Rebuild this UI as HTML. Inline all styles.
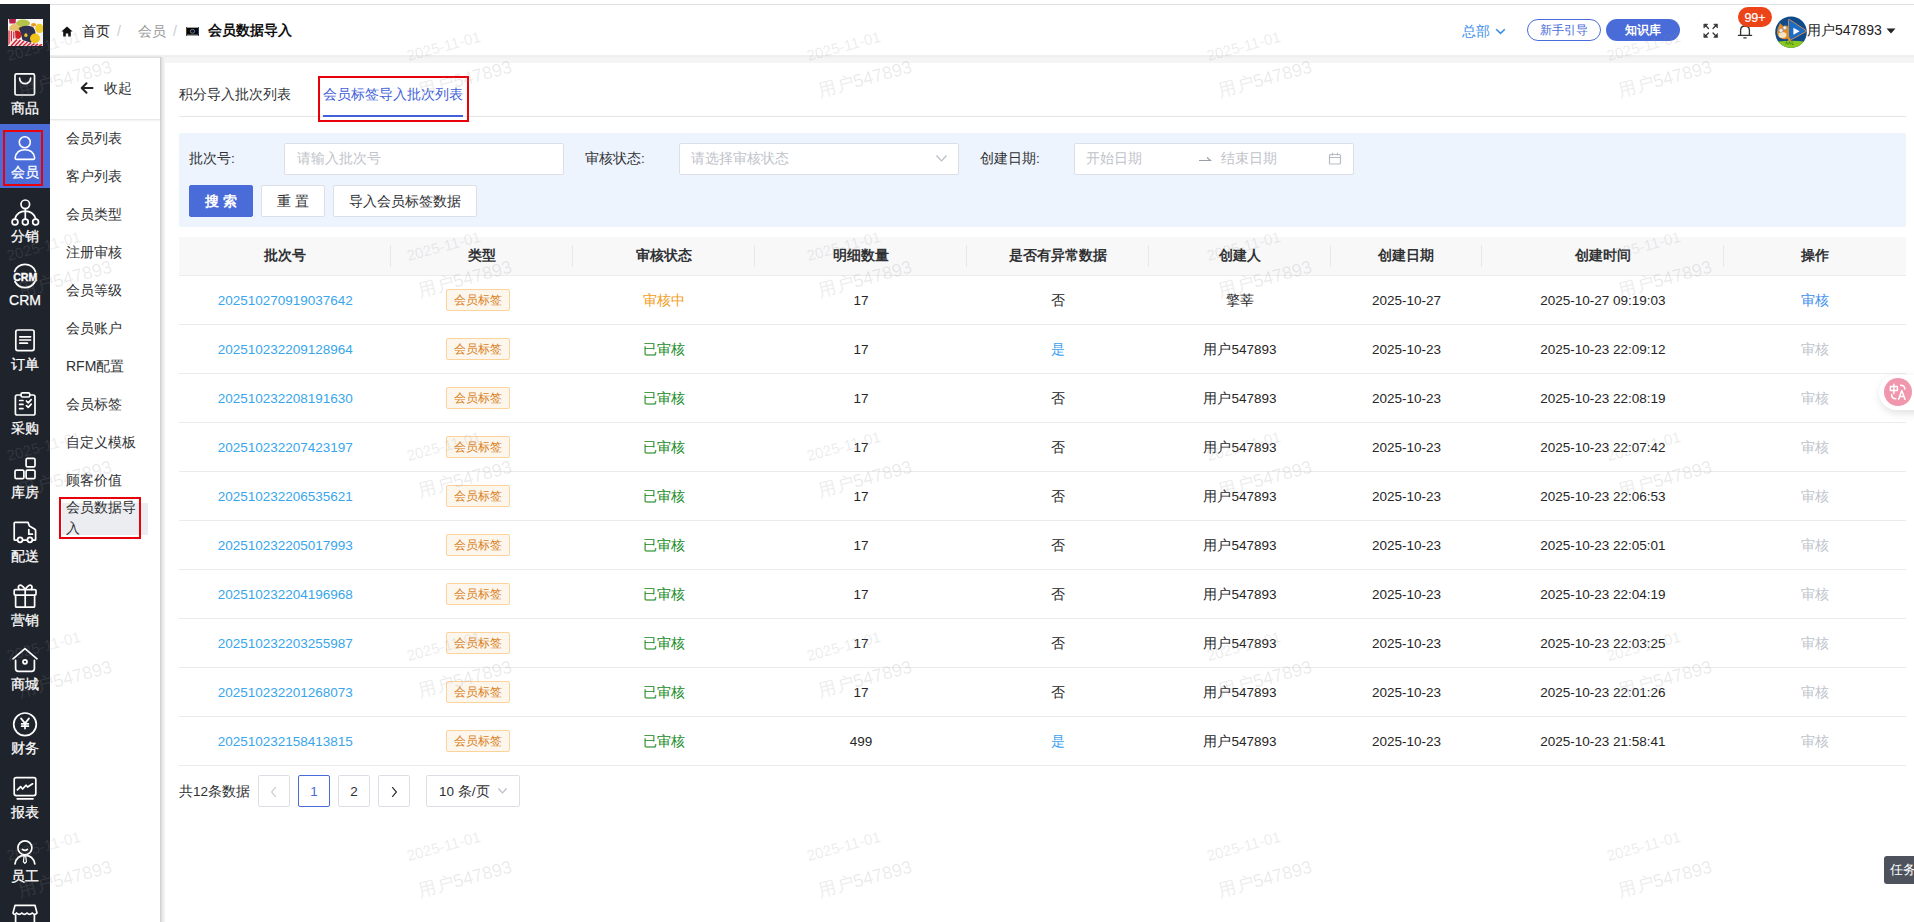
<!DOCTYPE html>
<html><head><meta charset="utf-8"><title>会员数据导入</title>
<style>
*{box-sizing:border-box;margin:0;padding:0}
html,body{width:1914px;height:922px;overflow:hidden;background:#fff;font-family:"Liberation Sans",sans-serif;color:#333}
.abs{position:absolute}
#topline{position:absolute;left:50px;top:4px;width:1864px;height:1px;background:#dfe1e2}
#side{position:absolute;left:0;top:4px;width:50px;height:918px;background:#1f232b}
#logo{position:absolute;left:8px;top:15px;width:35px;height:27px;overflow:hidden;background:#fff}
.mi{position:absolute;left:0;width:50px;height:64px;color:#fff}
.mi svg{position:absolute;left:0;top:0;width:50px;height:64px}
.mi .lb{position:absolute;left:0;width:50px;top:38px;height:20px;line-height:20px;text-align:center;font-size:14px;color:#fff;-webkit-text-stroke:0.25px #fff}
.mi.act{background:#4a6cd8}
.redbox{position:absolute;border:2px solid #e8000b}
#header{position:absolute;left:50px;top:5px;width:1864px;height:50px;background:#fff}
#gray{position:absolute;left:50px;top:55px;width:1864px;height:867px;background:#f5f5f5}
#hshadow{position:absolute;left:50px;top:55px;width:1864px;height:3px;background:linear-gradient(#f0f0f0,#eeeeee 60%,#f5f5f5)}
#sub{position:absolute;left:50px;top:58px;width:110px;height:864px;background:#fff}
#subsh{position:absolute;left:160px;top:57px;width:5px;height:865px;background:linear-gradient(to right,#cbcbcb,#e6e6e6 40%,#f5f5f5)}
#subtop{position:absolute;left:50px;top:55px;width:110px;height:4px;background:linear-gradient(#f2f2f2,#dedede 70%,#e9e9e9)}
#collapse{position:absolute;left:0;top:0;width:110px;height:62px;border-bottom:1px solid #e8e8e8;box-shadow:0 1px 2px rgba(0,0,0,.06)}
.si{position:absolute;left:16px;font-size:14px;line-height:20px;color:#303133;white-space:nowrap}
#main{position:absolute;left:165px;top:63px;width:1749px;height:859px;background:#fff}
.bc{position:absolute;top:22px;font-size:14px;line-height:18px;white-space:nowrap}
.tab{position:absolute;top:84px;font-size:14px;line-height:20px;color:#303133;white-space:nowrap}
#tabline{position:absolute;left:179px;top:116px;width:1727px;height:1px;background:#e6e6e8}
#tabbar{position:absolute;left:323px;top:115px;width:140px;height:2px;background:#4361d8}
#filter{position:absolute;left:179px;top:133px;width:1727px;height:94px;background:#edf4fe;border-radius:2px}
.flb{position:absolute;top:150px;font-size:13.5px;line-height:18px;color:#303133;white-space:nowrap}
.inp{position:absolute;top:143px;width:280px;height:32px;background:#fff;border:1px solid #dcdfe6;border-radius:2px}
.ph{position:absolute;top:150px;font-size:13.7px;line-height:18px;color:#bfc3ca;white-space:nowrap}
.btn{position:absolute;top:185px;height:32px;border:1px solid #dcdfe6;background:#fff;border-radius:2px;font-size:14px;line-height:30px;text-align:center;color:#303133;white-space:nowrap}
.btn.pri{background:#4a6cd8;border-color:#4a6cd8;color:#fff}
#table{position:absolute;left:179px;top:237px;width:1727px;height:529px}
#thead{position:absolute;left:0;top:0;width:1727px;height:39px;background:#f8f8f9;border-bottom:1px solid #ebebeb}
.th{position:absolute;top:0;height:38px;padding-left:1px;line-height:37px;text-align:center;font-size:13.5px;font-weight:bold;color:#303133;white-space:nowrap}
.thsep{position:absolute;top:8px;width:1px;height:22px;background:#e6e8eb}
.tr{position:absolute;left:0;width:1727px;height:49px;border-bottom:1px solid #ebebeb}
.td{position:absolute;top:1px;height:48px;padding-left:1px;line-height:48px;text-align:center;font-size:13.5px;color:#262626;white-space:nowrap}
.link{color:#38a6ec}
.tag{display:inline-block;vertical-align:middle;height:22px;line-height:20px;padding:0 7px;font-size:12px;color:#d97f1c;background:#fdf6ec;border:1px solid #fbd39b;border-radius:2px;margin-top:-3px;position:relative;left:-4px}
.warn{color:#f39b16}
.ok{color:#148a24}
.yes{color:#3aa0f0}
.op{color:#3e8ef0}
.opd{color:#c0c4cc}
.pg{position:absolute;top:775px;width:32px;height:32px;border:1px solid #dcdfe6;border-radius:2px;background:#fff;text-align:center;line-height:31px;font-size:13.5px;color:#303133}
.wm1,.wm2{position:absolute;white-space:nowrap;transform-origin:0 100%;transform:rotate(-15deg);color:rgba(145,148,152,.19);pointer-events:none}
.wm1{font-size:15px;line-height:15px;margin-top:-13px;margin-left:1px}
.wm2{font-size:18px;line-height:18px;margin-top:-16px;margin-left:1px}
#wm{position:absolute;left:0;top:0;width:1914px;height:922px;overflow:hidden;pointer-events:none}

</style></head><body>
<div id="topline"></div>
<div id="gray"></div>
<div id="hshadow"></div>
<div id="header"></div>
<div id="main"></div>

<!-- LEFT SIDEBAR -->
<div id="side">
  <div id="logo">
    <svg width="35" height="27" viewBox="0 0 35 27">
      <defs><filter id="lb" x="-5%" y="-5%" width="110%" height="110%"><feGaussianBlur stdDeviation="0.45"/></filter></defs>
      <rect width="35" height="27" fill="#f4f2f0"/>
      <g filter="url(#lb)">
      <rect x="0" y="0" width="35" height="6" fill="#faf8f8"/>
      <path d="M1 0 H8 L7.5 4.6 H1.5Z" fill="#b8204a"/>
      <ellipse cx="15" cy="4.2" rx="7" ry="3.6" fill="#b4c44a"/>
      <ellipse cx="25.6" cy="5.8" rx="2.6" ry="1.8" fill="#ec9a20"/>
      <ellipse cx="6.3" cy="9.5" rx="5" ry="4.4" fill="#e6c070"/>
      <ellipse cx="31.5" cy="9.4" rx="4.2" ry="4.6" fill="#f0cc2a"/>
      <ellipse cx="12.5" cy="9.5" rx="2.5" ry="2.2" fill="#d8b020"/>
      <path d="M11 9 Q17 5 25 8 Q28.5 12 27 18 Q25 25 19 24.5 Q14 23 13.5 17Z" fill="#2e3050"/>
      <ellipse cx="8.6" cy="16" rx="4.9" ry="4.3" fill="#cc2028"/>
      <ellipse cx="17.9" cy="16.2" rx="1.6" ry="1.9" fill="#e8c820"/>
      <ellipse cx="27" cy="19.4" rx="5" ry="4.8" fill="#f0c414"/>
      <path d="M0 11 L7 12 L7.5 20 L0 27Z" fill="#f6f0f0"/>
      <path d="M1 11.5 V26 M3.4 12 V25 M5.8 12.5 V23" stroke="#d8283a" stroke-width="1.3"/>
      <path d="M0 27 L6 19 Q15 20.5 22 23.5 L35 25 V27Z" fill="#f4eaea"/>
      <path d="M3 27 L9 20.5 M7 27 L12.5 21 M11 27 L16 22 M15 27 L19.5 23 M19 27 L23 24 M23 27 L26.5 24.6 M27 27 L30 25 M31 27 L34 25.4" stroke="#d42234" stroke-width="1.5"/>
      </g>
    </svg>
  </div>
</div>

<div class="mi" style="top:60px">
  <svg width="50" height="64" viewBox="0 0 50 64" fill="none" stroke="#fff" stroke-width="1.7" stroke-linecap="round" stroke-linejoin="round">
    <rect x="15" y="13.8" width="19.5" height="21.2" rx="1.6"/>
    <path d="M19.6 18.2 A5.5 5.5 0 0 0 30.6 18.2"/>
  </svg>
  <div class="lb">商品</div>
</div>
<div class="mi act" style="top:124px">
  <svg width="50" height="64" viewBox="0 0 50 64" fill="none" stroke="#fff" stroke-width="1.6" stroke-linecap="round" stroke-linejoin="round">
    <circle cx="24.8" cy="18.3" r="5.5"/>
    <path d="M16.8 35.4 L33 35.4 Q34.8 35.4 34.6 33.6 Q33.2 25.8 24.9 25.8 Q16.6 25.8 15.2 33.6 Q15 35.4 16.8 35.4Z"/>
  </svg>
  <div class="lb">会员</div>
</div>
<div class="mi" style="top:188px">
  <svg width="50" height="64" viewBox="0 0 50 64" fill="none" stroke="#fff" stroke-width="1.7" stroke-linecap="round" stroke-linejoin="round">
    <circle cx="25.3" cy="16.3" r="4.3"/>
    <path d="M25.3 20.6 V30.6 M15 30.6 Q17.5 23.2 25.3 23.2 Q33.1 23.2 35.6 30.6"/>
    <circle cx="15" cy="34" r="2.9"/>
    <circle cx="25.3" cy="34" r="2.9"/>
    <circle cx="35.6" cy="34" r="2.9"/>
  </svg>
  <div class="lb">分销</div>
</div>
<div class="mi" style="top:252px">
  <svg width="50" height="64" viewBox="0 0 50 64" fill="none" stroke="#fff" stroke-width="1.7" stroke-linecap="round">
    <path d="M14.6 19.5 A11.2 11.2 0 0 1 35.4 19.5"/>
    <path d="M15 29.5 A11.2 11.2 0 0 0 35 29.5"/>
    <text x="25.2" y="28.9" fill="#fff" stroke="#fff" stroke-width="0.35" font-family="Liberation Sans" font-weight="bold" font-size="10.6" text-anchor="middle">CRM</text>
  </svg>
  <div class="lb" style="font-size:14px">CRM</div>
</div>
<div class="mi" style="top:316px">
  <svg width="50" height="64" viewBox="0 0 50 64" fill="none" stroke="#fff" stroke-width="1.7" stroke-linecap="round" stroke-linejoin="round">
    <rect x="15.8" y="14" width="18.3" height="20.6" rx="2"/>
    <path d="M19.8 20.8 H30.6 M19.8 24 H30.6 M19.8 27.2 H27.4"/>
  </svg>
  <div class="lb">订单</div>
</div>
<div class="mi" style="top:380px">
  <svg width="50" height="64" viewBox="0 0 50 64" fill="none" stroke="#fff" stroke-width="1.7" stroke-linecap="round" stroke-linejoin="round">
    <path d="M20.6 15 H17.2 Q15.4 15 15.4 16.8 V33.2 Q15.4 35 17.2 35 H33.2 Q35 35 35 33.2 V16.8 Q35 15 33.2 15 H29.8"/>
    <rect x="21" y="12.8" width="8.8" height="4.2" rx="1.6"/>
    <path d="M19.6 20.5 H23 M19.6 24.4 H23 M19.6 28.6 H23 M26.4 21 L28.2 22.8 L31.2 19.6 M26.4 25.6 L28.2 27.4 L31.2 24.2"/>
  </svg>
  <div class="lb">采购</div>
</div>
<div class="mi" style="top:444px">
  <svg width="50" height="64" viewBox="0 0 50 64" fill="none" stroke="#fff" stroke-width="1.7" stroke-linejoin="round">
    <rect x="26.1" y="14.3" width="8.9" height="8.6" rx="1.4"/>
    <rect x="15" y="26.1" width="8.9" height="8.6" rx="1.4"/>
    <rect x="26.1" y="26.1" width="8.9" height="8.6" rx="1.4"/>
  </svg>
  <div class="lb">库房</div>
</div>
<div class="mi" style="top:508px">
  <svg width="50" height="64" viewBox="0 0 50 64" fill="none" stroke="#fff" stroke-width="1.7" stroke-linecap="round" stroke-linejoin="round">
    <path d="M17.6 32.2 H15 Q14.2 32.2 14.2 31.4 V15.2 Q14.2 14.4 15 14.4 H28 L29.4 18 L34.6 21 Q35.6 21.6 35.6 22.8 V31.4 Q35.6 32.2 34.8 32.2 H32.4 M22.6 32.2 H27.4"/>
    <path d="M28.8 21.6 V26.2 H32.4"/>
    <circle cx="20.1" cy="31.8" r="2.5"/>
    <circle cx="29.9" cy="31.8" r="2.5"/>
  </svg>
  <div class="lb">配送</div>
</div>
<div class="mi" style="top:572px">
  <svg width="50" height="64" viewBox="0 0 50 64" fill="none" stroke="#fff" stroke-width="1.7" stroke-linecap="round" stroke-linejoin="round">
    <rect x="14.2" y="17.6" width="21.8" height="5.6" rx="1.2"/>
    <path d="M15.6 23.2 V34.2 Q15.6 35.2 16.6 35.2 H33.6 Q34.6 35.2 34.6 34.2 V23.2 M25.2 17.6 V35.2"/>
    <path d="M25.2 17.4 Q21.6 12.2 19.2 13.4 Q17.6 14.6 19 17.4 M25.2 17.4 Q28.8 12.2 31.2 13.4 Q32.8 14.6 31.4 17.4"/>
  </svg>
  <div class="lb">营销</div>
</div>
<div class="mi" style="top:636px">
  <svg width="50" height="64" viewBox="0 0 50 64" fill="none" stroke="#fff" stroke-width="1.7" stroke-linecap="round" stroke-linejoin="round">
    <path d="M13 22.8 L25 12.6 L37 22.8"/>
    <path d="M15.6 24.4 V32.6 Q15.6 35.4 18.4 35.4 H31.6 Q34.4 35.4 34.4 32.6 V24.4"/>
    <circle cx="25" cy="25.8" r="2" />
  </svg>
  <div class="lb">商城</div>
</div>
<div class="mi" style="top:700px">
  <svg width="50" height="64" viewBox="0 0 50 64" fill="none" stroke="#fff" stroke-width="1.7" stroke-linecap="round" stroke-linejoin="round">
    <circle cx="25" cy="24.3" r="11.3"/>
    <path d="M21 18.4 L25 23.4 L29 18.4 M25 23.4 V28.6 M21.6 23.8 H28.4 M21.6 26.2 H28.4"/>
  </svg>
  <div class="lb">财务</div>
</div>
<div class="mi" style="top:764px">
  <svg width="50" height="64" viewBox="0 0 50 64" fill="none" stroke="#fff" stroke-width="1.7" stroke-linecap="round" stroke-linejoin="round">
    <rect x="14.2" y="13.6" width="21.6" height="18" rx="2"/>
    <path d="M17.4 25.8 L20.6 22.6 L22.6 25 L26 21.2 L27.6 23 L32.6 19.8"/>
    <path d="M17.2 34.8 H33"/>
  </svg>
  <div class="lb">报表</div>
</div>
<div class="mi" style="top:828px">
  <svg width="50" height="64" viewBox="0 0 50 64" fill="none" stroke="#fff" stroke-width="1.7" stroke-linecap="round" stroke-linejoin="round">
    <circle cx="24.9" cy="19.8" r="7"/>
    <path d="M22.4 21.4 Q24.9 23.4 27.4 21.4"/>
    <path d="M15 35.8 Q16.6 27.4 24.9 27.4 Q33.2 27.4 34.8 35.8"/>
    <path d="M24.1 27.8 L23.4 33.8 L24.9 35.4 L26.4 33.8 L25.7 27.8Z" stroke-width="1.2"/>
  </svg>
  <div class="lb">员工</div>
</div>
<div class="mi" style="top:892px">
  <svg width="50" height="64" viewBox="0 0 50 64" fill="none" stroke="#fff" stroke-width="1.7" stroke-linecap="round" stroke-linejoin="round">
    <path d="M15 13.4 H35 L37 21 Q34.8 23.6 32.2 21 Q29.6 23.6 27 21 Q24.4 23.6 21.8 21 Q19.2 23.6 16.6 21 Q14.4 23.6 13 21Z"/>
    <path d="M15.6 23 V36 M34.4 23 V36"/>
  </svg>
  <div class="lb">门店</div>
</div>
<div class="redbox" style="left:3px;top:130px;width:40px;height:56px"></div>

<!-- SUB MENU -->
<div id="subsh"></div>
<div id="subtop"></div>
<div id="sub">
  <div id="collapse">
    <svg class="abs" style="left:30px;top:23px" width="14" height="14" viewBox="0 0 14 14" fill="none" stroke="#222" stroke-width="2" stroke-linecap="round" stroke-linejoin="round"><path d="M12.5 7 H2 M6.5 2.2 L1.7 7 L6.5 11.8"/></svg>
    <div class="si" style="left:54px;top:20px">收起</div>
  </div>
  <div class="si" style="top:70px">会员列表</div>
  <div class="si" style="top:108px">客户列表</div>
  <div class="si" style="top:146px">会员类型</div>
  <div class="si" style="top:184px">注册审核</div>
  <div class="si" style="top:222px">会员等级</div>
  <div class="si" style="top:260px">会员账户</div>
  <div class="si" style="top:298px">RFM配置</div>
  <div class="si" style="top:336px">会员标签</div>
  <div class="si" style="top:374px">自定义模板</div>
  <div class="si" style="top:412px">顾客价值</div>
  <div class="abs" style="left:12px;top:445px;width:86px;height:32px;background:#ebedf0"></div>
  <div class="si" style="top:439px;line-height:21px">会员数据导<br>入</div>
</div>
<div class="redbox" style="left:59px;top:497px;width:82px;height:42px"></div>

<!-- HEADER CONTENT -->
<svg class="abs" style="left:61px;top:26px" width="12" height="11" viewBox="0 0 12 11"><path d="M6 0.4 L11.6 5.6 H9.8 V10.6 H7.2 V7.4 H4.8 V10.6 H2.2 V5.6 H0.4Z" fill="#111"/></svg>
<div class="bc" style="left:82px;color:#222">首页</div>
<div class="bc" style="left:117px;color:#c8ccd2">/</div>
<div class="bc" style="left:138px;color:#9a9a9a">会员</div>
<div class="bc" style="left:173px;color:#c8ccd2">/</div>
<svg class="abs" style="left:186px;top:27px" width="13" height="9" viewBox="0 0 13 9"><rect x="0" y="0" width="13" height="9" fill="#050505"/><rect x="0.6" y="0" width="11.8" height="0.9" fill="#b8b8b8"/><rect x="0.6" y="7.6" width="11.8" height="1.4" fill="#a0a0a0"/><rect x="0" y="1" width="0.8" height="6.6" fill="#7a4a20"/><rect x="12.2" y="1" width="0.8" height="6.6" fill="#1a4aa0"/><ellipse cx="6.5" cy="4.3" rx="2.2" ry="1.9" fill="none" stroke="#7f9fb0" stroke-width="0.8"/><circle cx="6.5" cy="4.3" r="1" fill="#101050"/></svg>
<div class="bc" style="left:208px;color:#111;font-weight:bold;font-size:13.5px">会员数据导入</div>

<div class="abs" style="left:1462px;top:21px;font-size:14px;line-height:20px;color:#3b8ee8">总部</div>
<svg class="abs" style="left:1495px;top:28px" width="11" height="7" viewBox="0 0 11 7" fill="none" stroke="#3b8ee8" stroke-width="1.6"><path d="M1.2 1.2 L5.5 5.4 L9.8 1.2"/></svg>
<div class="abs" style="left:1527px;top:19px;width:74px;height:22px;border:1px solid #4a6cd8;border-radius:11px;text-align:center;font-size:12px;line-height:20px;color:#4a6cd8">新手引导</div>
<div class="abs" style="left:1606px;top:19px;width:74px;height:22px;background:#4a6cd8;border-radius:11px;text-align:center;font-size:12px;line-height:22px;color:#fff;font-weight:bold">知识库</div>
<svg class="abs" style="left:1702.5px;top:22.5px" width="15.5" height="15.5" viewBox="0 0 17 17" fill="none" stroke="#333" stroke-width="1.4" stroke-linecap="round"><path d="M2 2 L6 6 M15 2 L11 6 M2 15 L6 11 M15 15 L11 11"/><path d="M1.3 1.3 H5.2 L1.3 5.2Z M15.7 1.3 H11.8 L15.7 5.2Z M1.3 15.7 H5.2 L1.3 11.8Z M15.7 15.7 H11.8 L15.7 11.8Z" fill="#333" stroke-width="0.8" stroke-linejoin="round"/></svg>
<svg class="abs" style="left:1737px;top:22px" width="16" height="18" viewBox="0 0 16 18" fill="none" stroke="#333" stroke-width="1.3" stroke-linecap="round"><path d="M3.6 13.4 V8.2 Q3.6 4 8 4 Q12.4 4 12.4 8.2 V13.4 M1.4 13.4 H14.6"/><path d="M6.8 15.8 H9.2" stroke-width="1.2"/></svg>
<div class="abs" style="left:1738px;top:7px;width:34px;height:20px;background:#ec4418;border-radius:10px;color:#fff;font-size:12.5px;line-height:20px;padding-top:1px;text-align:center;-webkit-text-stroke:0.2px #fff">99+</div>
<svg class="abs" style="left:1775px;top:16px" width="32" height="32" viewBox="0 0 32 32">
  <defs><clipPath id="av"><circle cx="16" cy="16.2" r="15.8"/></clipPath></defs>
  <g clip-path="url(#av)">
    <rect width="32" height="32" fill="#0f4a8a"/>
    <path d="M0 26 Q16 23.5 32 26 V32 H0Z" fill="#8cc81e"/>
    <path d="M10.5 28.5 L11.5 25.5 L12.5 28.5 M13.5 28.5 L14.5 25.5 L15.5 28.5 M17 25.5 V28.5 H19" stroke="#3a8a20" stroke-width="0.8" fill="none"/>
    <path d="M14.2 3.4 Q13.4 3.2 13.4 4.2 V24.2 Q13.4 25.2 14.4 24.7 L31 15.6 Q31.8 15 31 14.5 L14.6 3.6Z" fill="#1a6cc4" stroke="#e0904a" stroke-width="0.9"/>
    <path d="M18.4 11.7 L24.6 15.2 L18.4 18.8Z" fill="#fff"/>
    <path d="M2.5 13 L5 7 L8 10 Q11 8.5 14 11 L14 21 Q12 24 8 23 Q3 22 2 17Z" fill="#e08a2a"/>
    <ellipse cx="7.5" cy="19" rx="4" ry="3" fill="#f6e6c0"/>
    <circle cx="6" cy="14.5" r="2" fill="#eee" stroke="#888" stroke-width="0.5"/>
    <circle cx="9.8" cy="11.8" r="1.9" fill="#eee" stroke="#888" stroke-width="0.5"/>
    <path d="M12 22 L14 25 L16 25 L14.5 21Z" fill="#e08a2a"/>
  </g>
</svg>
<div class="abs" style="left:1807px;top:20px;font-size:14px;line-height:20px;color:#222">用户547893</div>
<svg class="abs" style="left:1886px;top:28px" width="10" height="6" viewBox="0 0 10 6"><path d="M0.5 0.5 H9.5 L5 5.5Z" fill="#222"/></svg>

<!-- TABS -->
<div class="tab" style="left:179px">积分导入批次列表</div>
<div class="tab" style="left:323px;color:#4361d8">会员标签导入批次列表</div>
<div id="tabline"></div>
<div id="tabbar"></div>
<div class="redbox" style="left:318px;top:76px;width:151px;height:46px"></div>

<!-- FILTER -->
<div id="filter"></div>
<div class="flb" style="left:189px">批次号:</div>
<div class="inp" style="left:284px"></div>
<div class="ph" style="left:297px">请输入批次号</div>
<div class="flb" style="left:585px">审核状态:</div>
<div class="inp" style="left:679px"></div>
<div class="ph" style="left:691px">请选择审核状态</div>
<svg class="abs" style="left:935px;top:154px" width="13" height="9" viewBox="0 0 13 9" fill="none" stroke="#b8bcc4" stroke-width="1.2"><path d="M1.5 1.5 L6.5 6.8 L11.5 1.5"/></svg>
<div class="flb" style="left:980px">创建日期:</div>
<div class="inp" style="left:1074px"></div>
<div class="ph" style="left:1086px">开始日期</div>
<svg class="abs" style="left:1198px;top:155px" width="14" height="8" viewBox="0 0 14 8" fill="none" stroke="#9aa0a8" stroke-width="1.2"><path d="M1 5.5 H12.5 L9 2.5"/></svg>
<div class="ph" style="left:1221px">结束日期</div>
<svg class="abs" style="left:1328px;top:152px" width="14" height="13" viewBox="0 0 14 13" fill="none" stroke="#b8bcc4" stroke-width="1.2"><rect x="1.5" y="2.5" width="11" height="9.5" rx="1"/><path d="M1.5 5.5 H12.5 M4.5 0.8 V3.5 M9.5 0.8 V3.5"/></svg>
<div class="btn pri" style="left:189px;width:64px;font-weight:bold;">搜 索</div>
<div class="btn" style="left:261px;width:64px;">重 置</div>
<div class="btn" style="left:333px;width:144px">导入会员标签数据</div>

<!-- TABLE -->
<div id="table">
  <div id="thead"></div>
<div class="th" style="left:0px;width:211.5px">批次号</div>
<div class="th" style="left:211.5px;width:181.5px">类型</div>
<div class="thsep" style="left:211.0px"></div>
<div class="th" style="left:393px;width:182.5px">审核状态</div>
<div class="thsep" style="left:392.5px"></div>
<div class="th" style="left:575.5px;width:212.0px">明细数量</div>
<div class="thsep" style="left:575.0px"></div>
<div class="th" style="left:787.5px;width:181.70000000000005px">是否有异常数据</div>
<div class="thsep" style="left:787.0px"></div>
<div class="th" style="left:969.2px;width:182.5px">创建人</div>
<div class="thsep" style="left:968.7px"></div>
<div class="th" style="left:1151.7px;width:150.5999999999999px">创建日期</div>
<div class="thsep" style="left:1151.2px"></div>
<div class="th" style="left:1302.3px;width:242.20000000000005px">创建时间</div>
<div class="thsep" style="left:1301.8px"></div>
<div class="th" style="left:1544.5px;width:182.5px">操作</div>
<div class="thsep" style="left:1544.0px"></div>
<div class="tr" style="top:39px">
<div class="td" style="left:0px;width:211.5px"><span class="link">202510270919037642</span></div>
<div class="td" style="left:211.5px;width:181.5px"><span class="tag">会员标签</span></div>
<div class="td" style="left:393px;width:182.5px"><span class="warn">审核中</span></div>
<div class="td" style="left:575.5px;width:212.0px">17</div>
<div class="td" style="left:787.5px;width:181.70000000000005px"><span class="">否</span></div>
<div class="td" style="left:969.2px;width:182.5px">擎莘</div>
<div class="td" style="left:1151.7px;width:150.5999999999999px">2025-10-27</div>
<div class="td" style="left:1302.3px;width:242.20000000000005px">2025-10-27 09:19:03</div>
<div class="td" style="left:1544.5px;width:182.5px"><span class="op">审核</span></div>
</div>
<div class="tr" style="top:88px">
<div class="td" style="left:0px;width:211.5px"><span class="link">202510232209128964</span></div>
<div class="td" style="left:211.5px;width:181.5px"><span class="tag">会员标签</span></div>
<div class="td" style="left:393px;width:182.5px"><span class="ok">已审核</span></div>
<div class="td" style="left:575.5px;width:212.0px">17</div>
<div class="td" style="left:787.5px;width:181.70000000000005px"><span class="yes">是</span></div>
<div class="td" style="left:969.2px;width:182.5px">用户547893</div>
<div class="td" style="left:1151.7px;width:150.5999999999999px">2025-10-23</div>
<div class="td" style="left:1302.3px;width:242.20000000000005px">2025-10-23 22:09:12</div>
<div class="td" style="left:1544.5px;width:182.5px"><span class="opd">审核</span></div>
</div>
<div class="tr" style="top:137px">
<div class="td" style="left:0px;width:211.5px"><span class="link">202510232208191630</span></div>
<div class="td" style="left:211.5px;width:181.5px"><span class="tag">会员标签</span></div>
<div class="td" style="left:393px;width:182.5px"><span class="ok">已审核</span></div>
<div class="td" style="left:575.5px;width:212.0px">17</div>
<div class="td" style="left:787.5px;width:181.70000000000005px"><span class="">否</span></div>
<div class="td" style="left:969.2px;width:182.5px">用户547893</div>
<div class="td" style="left:1151.7px;width:150.5999999999999px">2025-10-23</div>
<div class="td" style="left:1302.3px;width:242.20000000000005px">2025-10-23 22:08:19</div>
<div class="td" style="left:1544.5px;width:182.5px"><span class="opd">审核</span></div>
</div>
<div class="tr" style="top:186px">
<div class="td" style="left:0px;width:211.5px"><span class="link">202510232207423197</span></div>
<div class="td" style="left:211.5px;width:181.5px"><span class="tag">会员标签</span></div>
<div class="td" style="left:393px;width:182.5px"><span class="ok">已审核</span></div>
<div class="td" style="left:575.5px;width:212.0px">17</div>
<div class="td" style="left:787.5px;width:181.70000000000005px"><span class="">否</span></div>
<div class="td" style="left:969.2px;width:182.5px">用户547893</div>
<div class="td" style="left:1151.7px;width:150.5999999999999px">2025-10-23</div>
<div class="td" style="left:1302.3px;width:242.20000000000005px">2025-10-23 22:07:42</div>
<div class="td" style="left:1544.5px;width:182.5px"><span class="opd">审核</span></div>
</div>
<div class="tr" style="top:235px">
<div class="td" style="left:0px;width:211.5px"><span class="link">202510232206535621</span></div>
<div class="td" style="left:211.5px;width:181.5px"><span class="tag">会员标签</span></div>
<div class="td" style="left:393px;width:182.5px"><span class="ok">已审核</span></div>
<div class="td" style="left:575.5px;width:212.0px">17</div>
<div class="td" style="left:787.5px;width:181.70000000000005px"><span class="">否</span></div>
<div class="td" style="left:969.2px;width:182.5px">用户547893</div>
<div class="td" style="left:1151.7px;width:150.5999999999999px">2025-10-23</div>
<div class="td" style="left:1302.3px;width:242.20000000000005px">2025-10-23 22:06:53</div>
<div class="td" style="left:1544.5px;width:182.5px"><span class="opd">审核</span></div>
</div>
<div class="tr" style="top:284px">
<div class="td" style="left:0px;width:211.5px"><span class="link">202510232205017993</span></div>
<div class="td" style="left:211.5px;width:181.5px"><span class="tag">会员标签</span></div>
<div class="td" style="left:393px;width:182.5px"><span class="ok">已审核</span></div>
<div class="td" style="left:575.5px;width:212.0px">17</div>
<div class="td" style="left:787.5px;width:181.70000000000005px"><span class="">否</span></div>
<div class="td" style="left:969.2px;width:182.5px">用户547893</div>
<div class="td" style="left:1151.7px;width:150.5999999999999px">2025-10-23</div>
<div class="td" style="left:1302.3px;width:242.20000000000005px">2025-10-23 22:05:01</div>
<div class="td" style="left:1544.5px;width:182.5px"><span class="opd">审核</span></div>
</div>
<div class="tr" style="top:333px">
<div class="td" style="left:0px;width:211.5px"><span class="link">202510232204196968</span></div>
<div class="td" style="left:211.5px;width:181.5px"><span class="tag">会员标签</span></div>
<div class="td" style="left:393px;width:182.5px"><span class="ok">已审核</span></div>
<div class="td" style="left:575.5px;width:212.0px">17</div>
<div class="td" style="left:787.5px;width:181.70000000000005px"><span class="">否</span></div>
<div class="td" style="left:969.2px;width:182.5px">用户547893</div>
<div class="td" style="left:1151.7px;width:150.5999999999999px">2025-10-23</div>
<div class="td" style="left:1302.3px;width:242.20000000000005px">2025-10-23 22:04:19</div>
<div class="td" style="left:1544.5px;width:182.5px"><span class="opd">审核</span></div>
</div>
<div class="tr" style="top:382px">
<div class="td" style="left:0px;width:211.5px"><span class="link">202510232203255987</span></div>
<div class="td" style="left:211.5px;width:181.5px"><span class="tag">会员标签</span></div>
<div class="td" style="left:393px;width:182.5px"><span class="ok">已审核</span></div>
<div class="td" style="left:575.5px;width:212.0px">17</div>
<div class="td" style="left:787.5px;width:181.70000000000005px"><span class="">否</span></div>
<div class="td" style="left:969.2px;width:182.5px">用户547893</div>
<div class="td" style="left:1151.7px;width:150.5999999999999px">2025-10-23</div>
<div class="td" style="left:1302.3px;width:242.20000000000005px">2025-10-23 22:03:25</div>
<div class="td" style="left:1544.5px;width:182.5px"><span class="opd">审核</span></div>
</div>
<div class="tr" style="top:431px">
<div class="td" style="left:0px;width:211.5px"><span class="link">202510232201268073</span></div>
<div class="td" style="left:211.5px;width:181.5px"><span class="tag">会员标签</span></div>
<div class="td" style="left:393px;width:182.5px"><span class="ok">已审核</span></div>
<div class="td" style="left:575.5px;width:212.0px">17</div>
<div class="td" style="left:787.5px;width:181.70000000000005px"><span class="">否</span></div>
<div class="td" style="left:969.2px;width:182.5px">用户547893</div>
<div class="td" style="left:1151.7px;width:150.5999999999999px">2025-10-23</div>
<div class="td" style="left:1302.3px;width:242.20000000000005px">2025-10-23 22:01:26</div>
<div class="td" style="left:1544.5px;width:182.5px"><span class="opd">审核</span></div>
</div>
<div class="tr" style="top:480px">
<div class="td" style="left:0px;width:211.5px"><span class="link">202510232158413815</span></div>
<div class="td" style="left:211.5px;width:181.5px"><span class="tag">会员标签</span></div>
<div class="td" style="left:393px;width:182.5px"><span class="ok">已审核</span></div>
<div class="td" style="left:575.5px;width:212.0px">499</div>
<div class="td" style="left:787.5px;width:181.70000000000005px"><span class="yes">是</span></div>
<div class="td" style="left:969.2px;width:182.5px">用户547893</div>
<div class="td" style="left:1151.7px;width:150.5999999999999px">2025-10-23</div>
<div class="td" style="left:1302.3px;width:242.20000000000005px">2025-10-23 21:58:41</div>
<div class="td" style="left:1544.5px;width:182.5px"><span class="opd">审核</span></div>
</div>
</div>

<!-- PAGINATION -->
<div class="abs" style="left:179px;top:782px;font-size:13.5px;line-height:20px;color:#303133">共12条数据</div>
<div class="pg" style="left:258px"><svg width="12" height="12" viewBox="0 0 12 12" style="margin-top:10px" fill="none" stroke="#c0c4cc" stroke-width="1.1"><path d="M7.8 1.2 L3.6 6 L7.8 10.8"/></svg></div>
<div class="pg" style="left:298px;border-color:#4a6cd8;color:#4a6cd8">1</div>
<div class="pg" style="left:338px">2</div>
<div class="pg" style="left:378px"><svg width="12" height="12" viewBox="0 0 12 12" style="margin-top:10px" fill="none" stroke="#303133" stroke-width="1.2"><path d="M4.2 1.2 L8.4 6 L4.2 10.8"/></svg></div>
<div class="pg" style="left:426px;width:94px;text-align:left;padding-left:12px">10 条/页</div>
<svg class="abs" style="left:497px;top:787px" width="11" height="8" viewBox="0 0 11 8" fill="none" stroke="#b8bcc4" stroke-width="1.2"><path d="M1.5 1.5 L5.5 5.8 L9.5 1.5"/></svg>

<!-- FLOATERS -->
<div class="abs" style="left:1879px;top:375px;width:60px;height:35px;border-radius:17.5px;background:#fff;box-shadow:1px 3px 8px rgba(0,0,0,.13)"></div>
<svg class="abs" style="left:1884px;top:377px" width="30" height="30" viewBox="0 0 30 30"><circle cx="14" cy="15" r="14" fill="#f097ad"/><g fill="none" stroke="#fff" stroke-width="1.5" stroke-linecap="round" stroke-linejoin="round"><rect x="6.4" y="9.6" width="7" height="4"/><path d="M9.9 7.2 V16.4 M16.6 8.2 Q20.8 8.2 20.8 12 M7.6 17.6 Q7.6 21.8 11.8 21.8 M14.6 22.2 L17.8 13.6 L21 22.2 M15.8 19.4 H19.8"/></g></svg>
<div class="abs" style="left:1884px;top:856px;width:34px;height:28px;background:#4d525c;border-radius:3px;color:#fff;font-size:13px;line-height:28px;padding-left:6px;white-space:nowrap">任务</div>

<div id="wm">
<div class="wm1" style="left:-392px;top:-139px">2025-11-01</div>
<div class="wm2" style="left:-380px;top:-102px">用户547893</div>
<div class="wm1" style="left:8px;top:-139px">2025-11-01</div>
<div class="wm2" style="left:20px;top:-102px">用户547893</div>
<div class="wm1" style="left:408px;top:-139px">2025-11-01</div>
<div class="wm2" style="left:420px;top:-102px">用户547893</div>
<div class="wm1" style="left:808px;top:-139px">2025-11-01</div>
<div class="wm2" style="left:820px;top:-102px">用户547893</div>
<div class="wm1" style="left:1208px;top:-139px">2025-11-01</div>
<div class="wm2" style="left:1220px;top:-102px">用户547893</div>
<div class="wm1" style="left:1608px;top:-139px">2025-11-01</div>
<div class="wm2" style="left:1620px;top:-102px">用户547893</div>
<div class="wm1" style="left:2008px;top:-139px">2025-11-01</div>
<div class="wm2" style="left:2020px;top:-102px">用户547893</div>
<div class="wm1" style="left:-392px;top:61px">2025-11-01</div>
<div class="wm2" style="left:-380px;top:98px">用户547893</div>
<div class="wm1" style="left:8px;top:61px">2025-11-01</div>
<div class="wm2" style="left:20px;top:98px">用户547893</div>
<div class="wm1" style="left:408px;top:61px">2025-11-01</div>
<div class="wm2" style="left:420px;top:98px">用户547893</div>
<div class="wm1" style="left:808px;top:61px">2025-11-01</div>
<div class="wm2" style="left:820px;top:98px">用户547893</div>
<div class="wm1" style="left:1208px;top:61px">2025-11-01</div>
<div class="wm2" style="left:1220px;top:98px">用户547893</div>
<div class="wm1" style="left:1608px;top:61px">2025-11-01</div>
<div class="wm2" style="left:1620px;top:98px">用户547893</div>
<div class="wm1" style="left:2008px;top:61px">2025-11-01</div>
<div class="wm2" style="left:2020px;top:98px">用户547893</div>
<div class="wm1" style="left:-392px;top:261px">2025-11-01</div>
<div class="wm2" style="left:-380px;top:298px">用户547893</div>
<div class="wm1" style="left:8px;top:261px">2025-11-01</div>
<div class="wm2" style="left:20px;top:298px">用户547893</div>
<div class="wm1" style="left:408px;top:261px">2025-11-01</div>
<div class="wm2" style="left:420px;top:298px">用户547893</div>
<div class="wm1" style="left:808px;top:261px">2025-11-01</div>
<div class="wm2" style="left:820px;top:298px">用户547893</div>
<div class="wm1" style="left:1208px;top:261px">2025-11-01</div>
<div class="wm2" style="left:1220px;top:298px">用户547893</div>
<div class="wm1" style="left:1608px;top:261px">2025-11-01</div>
<div class="wm2" style="left:1620px;top:298px">用户547893</div>
<div class="wm1" style="left:2008px;top:261px">2025-11-01</div>
<div class="wm2" style="left:2020px;top:298px">用户547893</div>
<div class="wm1" style="left:-392px;top:461px">2025-11-01</div>
<div class="wm2" style="left:-380px;top:498px">用户547893</div>
<div class="wm1" style="left:8px;top:461px">2025-11-01</div>
<div class="wm2" style="left:20px;top:498px">用户547893</div>
<div class="wm1" style="left:408px;top:461px">2025-11-01</div>
<div class="wm2" style="left:420px;top:498px">用户547893</div>
<div class="wm1" style="left:808px;top:461px">2025-11-01</div>
<div class="wm2" style="left:820px;top:498px">用户547893</div>
<div class="wm1" style="left:1208px;top:461px">2025-11-01</div>
<div class="wm2" style="left:1220px;top:498px">用户547893</div>
<div class="wm1" style="left:1608px;top:461px">2025-11-01</div>
<div class="wm2" style="left:1620px;top:498px">用户547893</div>
<div class="wm1" style="left:2008px;top:461px">2025-11-01</div>
<div class="wm2" style="left:2020px;top:498px">用户547893</div>
<div class="wm1" style="left:-392px;top:661px">2025-11-01</div>
<div class="wm2" style="left:-380px;top:698px">用户547893</div>
<div class="wm1" style="left:8px;top:661px">2025-11-01</div>
<div class="wm2" style="left:20px;top:698px">用户547893</div>
<div class="wm1" style="left:408px;top:661px">2025-11-01</div>
<div class="wm2" style="left:420px;top:698px">用户547893</div>
<div class="wm1" style="left:808px;top:661px">2025-11-01</div>
<div class="wm2" style="left:820px;top:698px">用户547893</div>
<div class="wm1" style="left:1208px;top:661px">2025-11-01</div>
<div class="wm2" style="left:1220px;top:698px">用户547893</div>
<div class="wm1" style="left:1608px;top:661px">2025-11-01</div>
<div class="wm2" style="left:1620px;top:698px">用户547893</div>
<div class="wm1" style="left:2008px;top:661px">2025-11-01</div>
<div class="wm2" style="left:2020px;top:698px">用户547893</div>
<div class="wm1" style="left:-392px;top:861px">2025-11-01</div>
<div class="wm2" style="left:-380px;top:898px">用户547893</div>
<div class="wm1" style="left:8px;top:861px">2025-11-01</div>
<div class="wm2" style="left:20px;top:898px">用户547893</div>
<div class="wm1" style="left:408px;top:861px">2025-11-01</div>
<div class="wm2" style="left:420px;top:898px">用户547893</div>
<div class="wm1" style="left:808px;top:861px">2025-11-01</div>
<div class="wm2" style="left:820px;top:898px">用户547893</div>
<div class="wm1" style="left:1208px;top:861px">2025-11-01</div>
<div class="wm2" style="left:1220px;top:898px">用户547893</div>
<div class="wm1" style="left:1608px;top:861px">2025-11-01</div>
<div class="wm2" style="left:1620px;top:898px">用户547893</div>
<div class="wm1" style="left:2008px;top:861px">2025-11-01</div>
<div class="wm2" style="left:2020px;top:898px">用户547893</div>
<div class="wm1" style="left:-392px;top:1061px">2025-11-01</div>
<div class="wm2" style="left:-380px;top:1098px">用户547893</div>
<div class="wm1" style="left:8px;top:1061px">2025-11-01</div>
<div class="wm2" style="left:20px;top:1098px">用户547893</div>
<div class="wm1" style="left:408px;top:1061px">2025-11-01</div>
<div class="wm2" style="left:420px;top:1098px">用户547893</div>
<div class="wm1" style="left:808px;top:1061px">2025-11-01</div>
<div class="wm2" style="left:820px;top:1098px">用户547893</div>
<div class="wm1" style="left:1208px;top:1061px">2025-11-01</div>
<div class="wm2" style="left:1220px;top:1098px">用户547893</div>
<div class="wm1" style="left:1608px;top:1061px">2025-11-01</div>
<div class="wm2" style="left:1620px;top:1098px">用户547893</div>
<div class="wm1" style="left:2008px;top:1061px">2025-11-01</div>
<div class="wm2" style="left:2020px;top:1098px">用户547893</div>
</div>

</body></html>
